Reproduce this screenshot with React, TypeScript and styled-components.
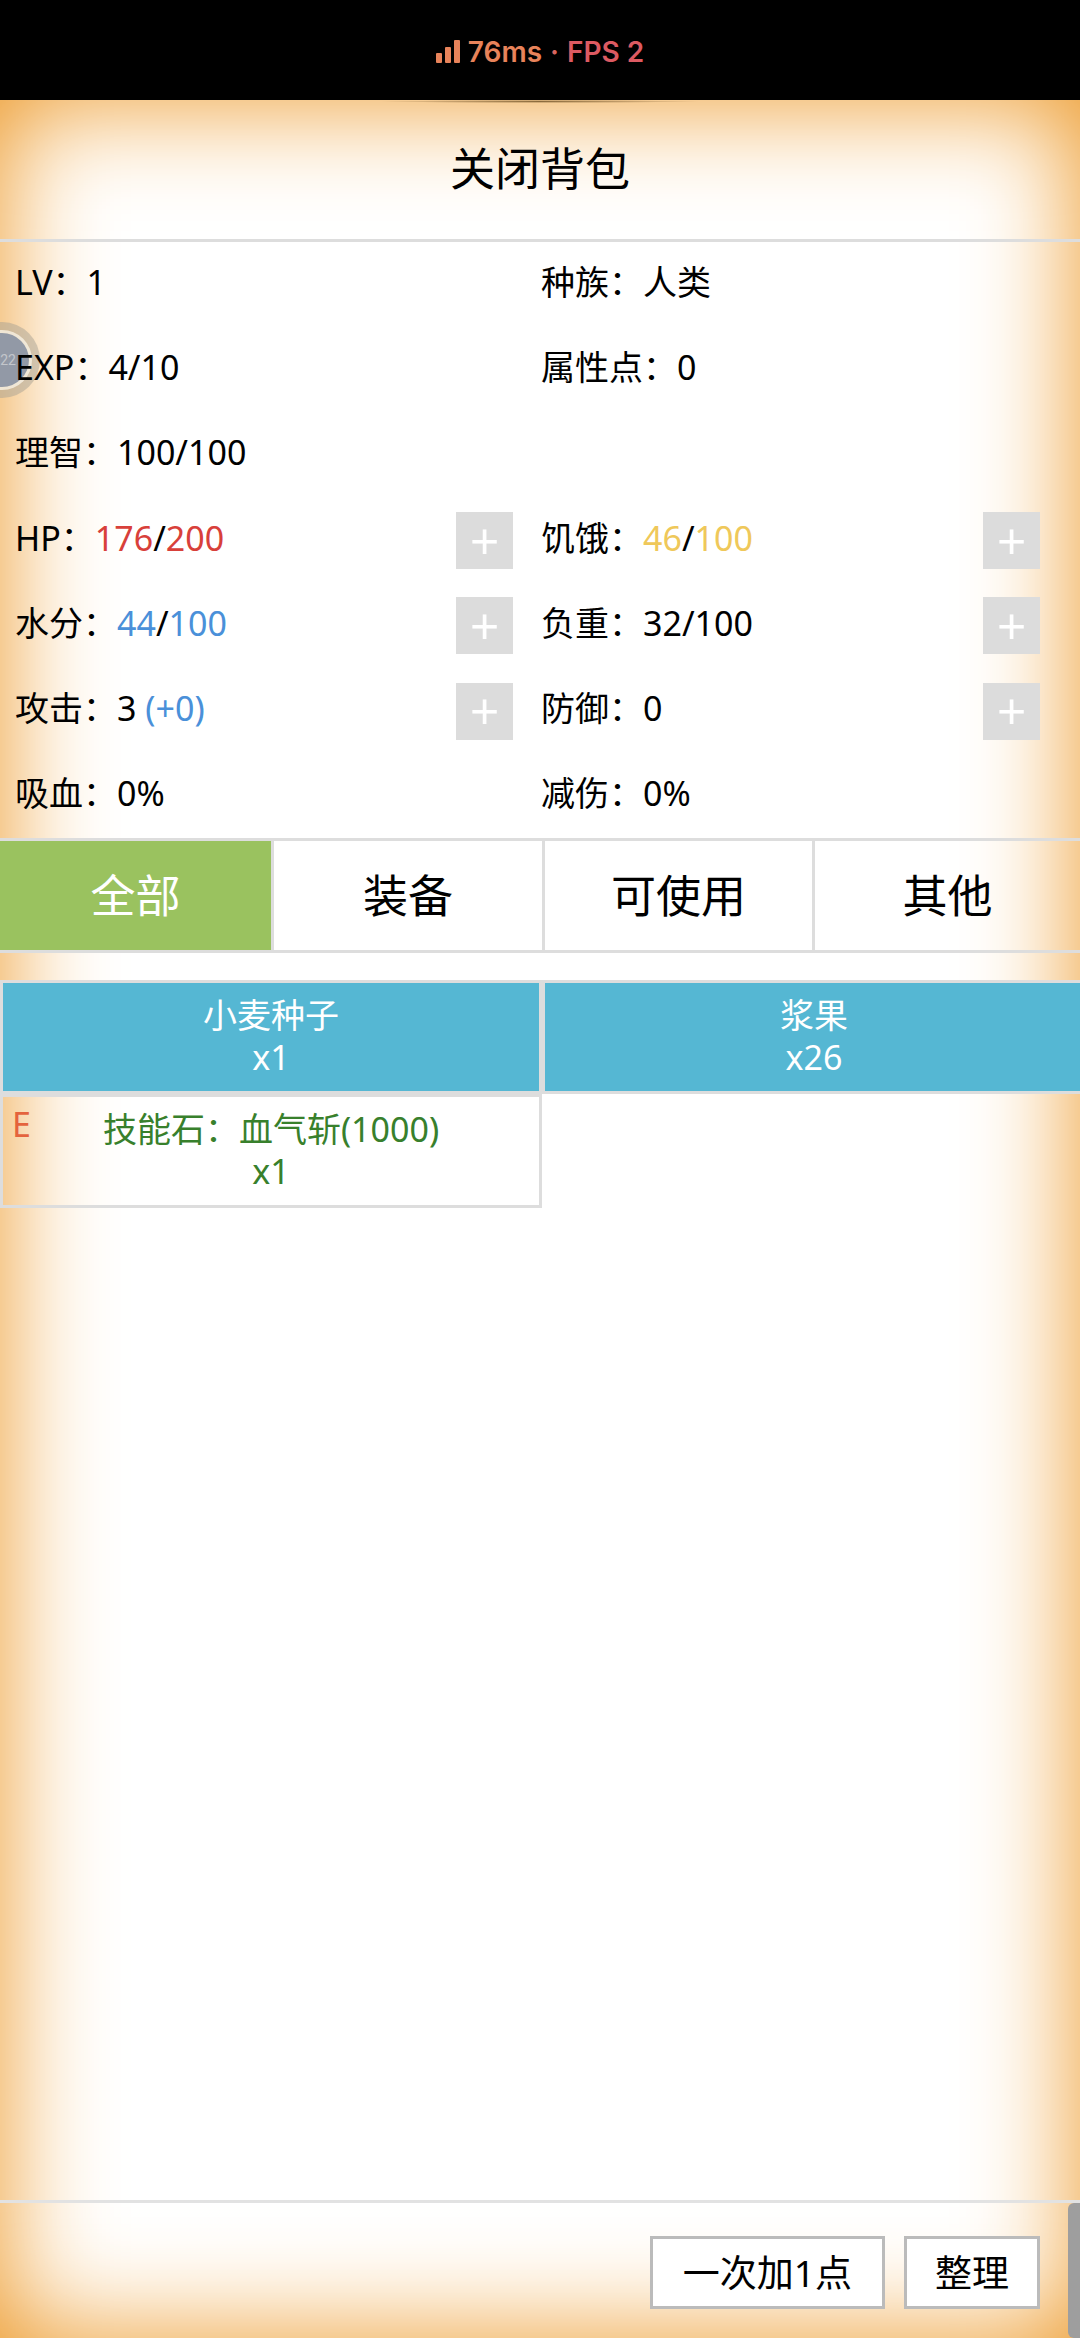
import type {ReactNode} from 'react'
import styled, {createGlobalStyle} from 'styled-components'

interface IStat {
	label: string
	value?: ReactNode
	plus?: boolean
}

const GlobalStyle = createGlobalStyle`
	html, body {
		margin: 0;
		padding: 0;
		background: #fff;
	}
	* {
		box-sizing: border-box;
	}
`

const font = `"Noto Sans", "Noto Sans CJK SC", sans-serif`

const Page = styled.div`
	display: flex;
	flex-direction: column;
	width: 1080px;
	height: 2338px;
	overflow: hidden;
	background: #fff;
	color: #000;
	font-family: ${font};
	font-size: 34px;
`
const StatusBar = styled.div`
	display: flex;
	justify-content: center;
	align-items: center;
	gap: 8px;
	flex: none;
	height: 100px;
	padding-top: 4px;
	background: #000;
	font-family: Inter, sans-serif;
	font-size: 28px;
	font-weight: 600;
`
const Ping = styled.span`
	color: #e8835a;
`
const Dot = styled.span`
	color: #d9655f;
`
const Fps = styled.span`
	color: #dc5a62;
`
const Panel = styled.div`
	position: relative;
	display: flex;
	flex-direction: column;
	flex: 1;
	min-height: 0;
	box-shadow: inset 0 0 110px 0 #ec9520;
	&::before {
		content: '';
		position: absolute;
		top: 0;
		left: 380px;
		width: 320px;
		height: 3px;
		background: radial-gradient(ellipse at center, #8a6a3c 0%, transparent 70%);
	}
`
const BallWrap = styled.div`
	position: absolute;
	top: 220px;
	left: -36px;
	display: flex;
`
const Title = styled.div`
	display: flex;
	justify-content: center;
	align-items: center;
	flex: none;
	height: 142px;
	padding-bottom: 6px;
	font-size: 45px;
	border-bottom: 3px solid #ddd;
`
const StatsGrid = styled.div`
	position: relative;
	display: grid;
	grid-template-columns: 526px 527px;
	grid-auto-rows: 85.3px;
	flex: none;
	padding: 0 27px 0 0;
	line-height: 1;
	white-space: pre;
`
const StatCell = styled.div`
	display: flex;
	justify-content: space-between;
	align-items: center;
	padding: 0 13px 0 15px;
`
const StatText = styled.span`
	padding-bottom: 6px;
`
const Tint = styled.span<{$color: string}>`
	color: ${(props) => props.$color};
`
const PlusButton = styled.div`
	display: flex;
	justify-content: center;
	align-items: center;
	width: 57px;
	height: 57px;
	background: #dcdcdc;
	color: #fff;
	font-family: "Liberation Sans", sans-serif;
	font-size: 50px;
	line-height: 1;
`
const Tabs = styled.div`
	position: relative;
	display: grid;
	grid-template-columns: 274px 271px 270px 1fr;
	flex: none;
	height: 115px;
	margin-top: -1px;
	border-top: 3px solid #ddd;
	border-bottom: 3px solid #ddd;
`
const Tab = styled.div<{$active?: boolean}>`
	display: flex;
	justify-content: center;
	align-items: center;
	padding-bottom: 5px;
	font-size: 45px;
	border-right: 3px solid #ddd;
	background: ${(props) => (props.$active ? '#9ac25f' : 'transparent')};
	color: ${(props) => (props.$active ? '#fff' : '#000')};
	&:last-child {
		border-right: none;
	}
`
const Items = styled.div`
	display: grid;
	grid-template-columns: 542px 541px;
	grid-auto-rows: 114px;
	align-content: start;
	flex: 1;
	min-height: 0;
	padding-top: 27px;
`
const Item = styled.div<{$filled?: boolean; $color?: string}>`
	position: relative;
	padding-top: 11px;
	text-align: center;
	line-height: 42px;
	border: 3px solid #ddd;
	background: ${(props) => (props.$filled ? '#55b7d3' : 'transparent')};
	color: ${(props) => (props.$filled ? '#fff' : props.$color)};
	&:nth-child(2) {
		border-right: none;
	}
`
const Badge = styled.span`
	position: absolute;
	top: 6px;
	left: 9px;
	color: #e4633d;
`
const Footer = styled.div`
	display: flex;
	justify-content: flex-end;
	align-items: flex-start;
	gap: 19px;
	flex: none;
	height: 138px;
	padding: 33px 40px 0 0;
	border-top: 3px solid #e2e2e2;
`
const FooterButton = styled.div<{$pad: number}>`
	display: flex;
	justify-content: center;
	align-items: center;
	height: 73px;
	padding: 0 ${(props) => props.$pad}px 4px;
	background: #fff;
	border: 3px solid #bbb;
	font-size: 37px;
`
const ScrollThumb = styled.div`
	position: absolute;
	right: 0;
	bottom: 0;
	width: 12px;
	height: 135px;
	background: #9e9e9e;
	border-radius: 6px 0 0 6px;
`

const stats: Array<IStat> = [
	{label: 'LV', value: '1'},
	{label: '种族', value: '人类'},
	{label: 'EXP', value: '4/10'},
	{label: '属性点', value: '0'},
	{label: '理智', value: '100/100'},
	{label: ''},
	{
		label: 'HP',
		plus: true,
		value: (
			<>
				<Tint $color="#d8403a">176</Tint>/<Tint $color="#d8403a">200</Tint>
			</>
		),
	},
	{
		label: '饥饿',
		plus: true,
		value: (
			<>
				<Tint $color="#efc85a">46</Tint>/<Tint $color="#efc85a">100</Tint>
			</>
		),
	},
	{
		label: '水分',
		plus: true,
		value: (
			<>
				<Tint $color="#4a90d9">44</Tint>/<Tint $color="#4a90d9">100</Tint>
			</>
		),
	},
	{label: '负重', value: '32/100', plus: true},
	{
		label: '攻击',
		plus: true,
		value: (
			<>
				3 <Tint $color="#4a90d9">(+0)</Tint>
			</>
		),
	},
	{label: '防御', value: '0', plus: true},
	{label: '吸血', value: '0%'},
	{label: '减伤', value: '0%'},
]

const tabs = ['全部', '装备', '可使用', '其他']

function SignalIcon() {
	return (
		<svg width="24" height="24" viewBox="0 0 24 24" fill="#e8835a">
			<rect x="0" y="13" width="6" height="10" rx="1" />
			<rect x="9" y="7" width="6" height="16" rx="1" />
			<rect x="18" y="0" width="6" height="23" rx="1" />
		</svg>
	)
}

function FloatBall() {
	return (
		<BallWrap>
			<svg width="78" height="80" viewBox="0 0 78 80">
				<circle cx="38" cy="40" r="38" fill="#a8a294" fillOpacity="0.5" />
				<circle cx="38" cy="40" r="30" fill="#f7f1e4" fillOpacity="0.8" />
				<circle cx="38" cy="40" r="27" fill="#9299a6" />
				<text x="44" y="45" textAnchor="middle" fontSize="14" fill="#c3c6cb" fontFamily="Roboto, sans-serif">
					22
				</text>
			</svg>
		</BallWrap>
	)
}

function App() {
	return (
		<Page>
			<GlobalStyle />
			<StatusBar>
				<SignalIcon />
				<Ping>76ms</Ping>
				<Dot>·</Dot>
				<Fps>FPS 2</Fps>
			</StatusBar>
			<Panel>
				<FloatBall />
				<Title>关闭背包</Title>
				<StatsGrid>
					{stats.map((stat, id) => (
						<StatCell key={id}>
							{stat.label && (
								<StatText>
									{stat.label}：{stat.value}
								</StatText>
							)}
							{stat.plus && <PlusButton>+</PlusButton>}
						</StatCell>
					))}
				</StatsGrid>
				<Tabs>
					{tabs.map((tab, id) => (
						<Tab key={tab} $active={id === 0}>
							{tab}
						</Tab>
					))}
				</Tabs>
				<Items>
					<Item $filled>
						小麦种子
						<br />
						x1
					</Item>
					<Item $filled>
						浆果
						<br />
						x26
					</Item>
					<Item $color="#38802c">
						<Badge>E</Badge>
						技能石：血气斩(1000)
						<br />
						x1
					</Item>
				</Items>
				<Footer>
					<FooterButton $pad={30}>一次加1点</FooterButton>
					<FooterButton $pad={28}>整理</FooterButton>
				</Footer>
				<ScrollThumb />
			</Panel>
		</Page>
	)
}

export default App
